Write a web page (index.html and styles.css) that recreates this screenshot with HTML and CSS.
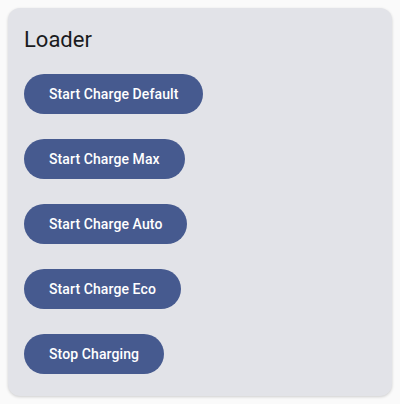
FILE: index.html
```html
<!DOCTYPE html>
<html>
<head>
<meta charset="utf-8">
<link rel="stylesheet" href="styles.css">
</head>
<body>
<div class="card">
  <h2 class="title">Loader</h2>
  <div class="buttons">
    <button class="btn">Start Charge Default</button>
    <button class="btn">Start Charge Max</button>
    <button class="btn">Start Charge Auto</button>
    <button class="btn">Start Charge Eco</button>
    <button class="btn">Stop Charging</button>
  </div>
</div>
</body>
</html>
```
FILE: styles.css
```css
html, body {
  margin: 0;
  padding: 0;
  background: #fafafa;
}
body {
  padding: 8px;
  font-family: Roboto, "Noto Sans", sans-serif;
}
.card {
  background: #e2e3e8;
  border-radius: 12px;
  box-shadow: 0 1px 3px rgba(0,0,0,0.18);
  padding: 18px 16px 22px 16px;
  height: 388px;
  box-sizing: border-box;
}
.title {
  margin: 0;
  font-size: 22px;
  font-weight: 400;
  line-height: 28px;
  color: #1a1b20;
}
.buttons {
  display: flex;
  flex-direction: column;
  align-items: flex-start;
  gap: 25px;
  margin-top: 20px;
}
.btn {
  height: 40px;
  border: none;
  border-radius: 20px;
  background: #465a8f;
  color: #ffffff;
  font-family: Roboto, sans-serif;
  font-size: 14px;
  font-weight: 500;
  padding: 0 25px;
  letter-spacing: 0.1px;
}
```
